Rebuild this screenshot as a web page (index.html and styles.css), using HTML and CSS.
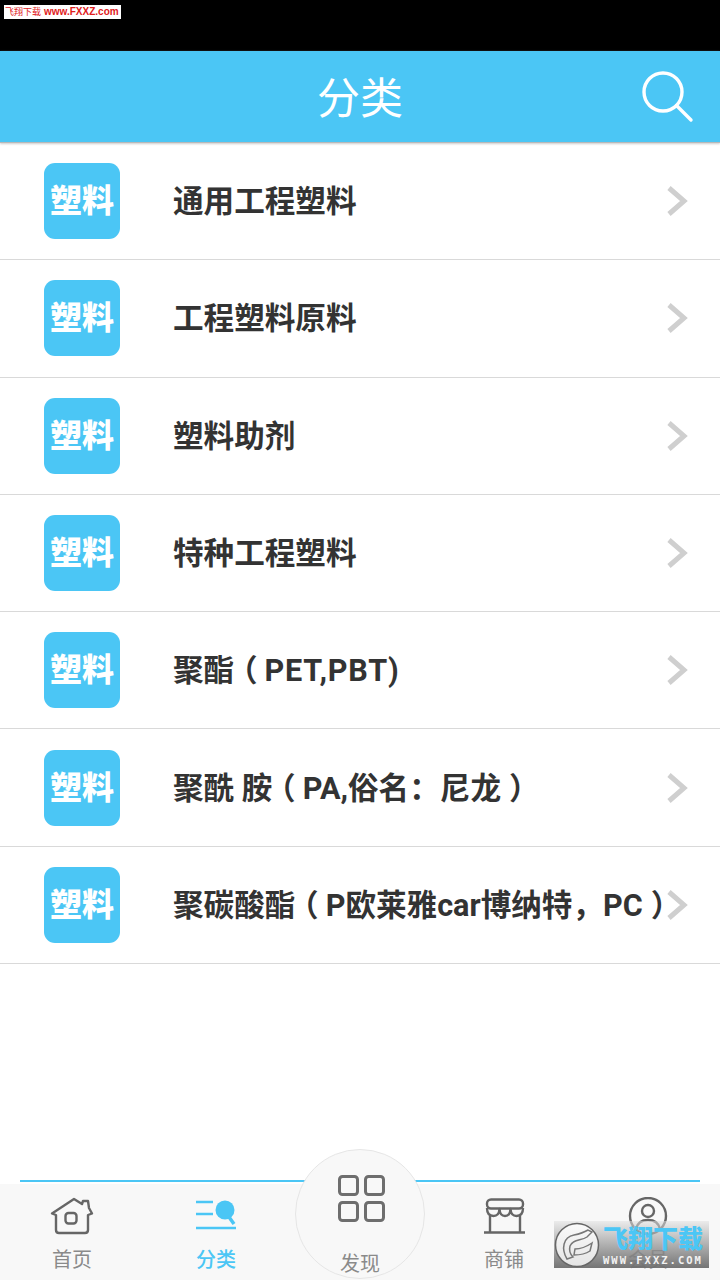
FILE: index.html
```html
<!DOCTYPE html>
<html lang="zh-CN">
<head>
<meta charset="utf-8">
<title>分类</title>
<link rel="stylesheet" href="styles.css">
</head>
<body>
<div class="page">
  <div class="status"><div class="mark-top"><span class="mark-cn">飞翔下载</span><span class="mark-latin">www.FXXZ.com</span></div></div>
  <header class="header">
    <h1 class="title">分类</h1>
    <svg class="search" viewBox="0 0 52 52" width="52" height="52"><circle cx="21" cy="21" r="19" fill="none" stroke="#fff" stroke-width="3.4"/><path d="M34.500 34.500 L49 49" stroke="#fff" stroke-width="3.4" stroke-linecap="round"/></svg>
  </header>
  <ul class="list">
    <li class="row"><div class="logo">塑料</div><div class="name">通用工程塑料</div><svg class="chev" viewBox="0 0 22 32" width="22" height="32"><path d="M3 3 L18 16 L3 29" fill="none" stroke="#cfcfcf" stroke-width="5"/></svg></li>
    <li class="row"><div class="logo">塑料</div><div class="name">工程塑料原料</div><svg class="chev" viewBox="0 0 22 32" width="22" height="32"><path d="M3 3 L18 16 L3 29" fill="none" stroke="#cfcfcf" stroke-width="5"/></svg></li>
    <li class="row"><div class="logo">塑料</div><div class="name">塑料助剂</div><svg class="chev" viewBox="0 0 22 32" width="22" height="32"><path d="M3 3 L18 16 L3 29" fill="none" stroke="#cfcfcf" stroke-width="5"/></svg></li>
    <li class="row"><div class="logo">塑料</div><div class="name">特种工程塑料</div><svg class="chev" viewBox="0 0 22 32" width="22" height="32"><path d="M3 3 L18 16 L3 29" fill="none" stroke="#cfcfcf" stroke-width="5"/></svg></li>
    <li class="row"><div class="logo">塑料</div><div class="name">聚酯<span class="paren">（</span><span class="wide">PET,PBT)</span></div><svg class="chev" viewBox="0 0 22 32" width="22" height="32"><path d="M3 3 L18 16 L3 29" fill="none" stroke="#cfcfcf" stroke-width="5"/></svg></li>
    <li class="row"><div class="logo">塑料</div><div class="name">聚酰 胺<span class="paren">（</span>PA,俗名<span class="punct">：</span>尼龙<span class="paren">）</span></div><svg class="chev" viewBox="0 0 22 32" width="22" height="32"><path d="M3 3 L18 16 L3 29" fill="none" stroke="#cfcfcf" stroke-width="5"/></svg></li>
    <li class="row"><div class="logo">塑料</div><div class="name">聚碳酸酯<span class="paren">（</span>P欧莱雅car博纳特<span class="punct">，</span>PC<span class="paren">）</span></div><svg class="chev" viewBox="0 0 22 32" width="22" height="32"><path d="M3 3 L18 16 L3 29" fill="none" stroke="#cfcfcf" stroke-width="5"/></svg></li>
  </ul>
  <div class="tab-rule"></div>
  <nav class="tabs">
    <div class="tab">
      <svg class="tab-icon" viewBox="0 0 44 38" width="44" height="38"><path d="M2 16.500 L24 2 L32 7 L33 4 L38 4 L39 11 L42 16.500 L38 18 L38 33 Q38 36 35 36 L9 36 Q6 36 6 33 L6 18 Z" fill="none" stroke="#666" stroke-width="2.400" stroke-linejoin="round"/><rect x="15.500" y="16" width="11" height="10.500" rx="3" fill="none" stroke="#666" stroke-width="2.400"/></svg>
      <span class="tab-label">首页</span>
    </div>
    <div class="tab tab-active">
      <svg class="tab-icon" viewBox="0 0 44 38" width="44" height="38"><path d="M2 5 H19 M2 17 H19 M2 31 H42" stroke="#4bc6f5" stroke-width="2.400" fill="none"/><circle cx="31" cy="13" r="9.500" fill="#4bc6f5"/><path d="M35 20 L40 27" stroke="#4bc6f5" stroke-width="3.500"/></svg>
      <span class="tab-label">分类</span>
    </div>
    <div class="tab tab-spacer"></div>
    <div class="tab">
      <svg class="tab-icon" viewBox="0 0 44 38" width="44" height="38"><rect x="5" y="2.500" width="36" height="9" rx="4" fill="none" stroke="#666" stroke-width="2.400"/><path d="M5 11 Q5 19 11.500 19 Q17 19 17.500 12 Q18 19 23 19 Q28 19 28.500 12 Q29 19 34.500 19 Q41 19 41 11 M8 18 V35 M38 18 V35 M2 35.500 H43" fill="none" stroke="#666" stroke-width="2.400" stroke-linejoin="round"/></svg>
      <span class="tab-label">商铺</span>
    </div>
    <div class="tab">
      <svg class="tab-icon" viewBox="0 0 44 38" width="44" height="38"><circle cx="22" cy="19" r="18" fill="none" stroke="#666" stroke-width="2.400"/><circle cx="22" cy="14" r="6" fill="none" stroke="#666" stroke-width="2.400"/><path d="M10 32 Q12 23 22 23 Q32 23 34 32" fill="none" stroke="#666" stroke-width="2.400"/></svg>
      <span class="tab-label">会员</span>
    </div>
    <div class="discover">
      <svg class="discover-icon" viewBox="0 0 48 48" width="48" height="48"><rect x="1.500" y="1.500" width="18" height="18" rx="3"/><rect x="27.500" y="1.500" width="18" height="18" rx="3"/><rect x="1.500" y="27.500" width="18" height="18" rx="3"/><rect x="27.500" y="27.500" width="18" height="18" rx="3"/></svg>
      <span class="tab-label">发现</span>
    </div>
    <div class="mark-bottom">
      <svg class="mark-logo" viewBox="0 0 46 46" width="46" height="46"><circle cx="23" cy="23" r="21.500" fill="#fff" fill-opacity=".8" stroke="#666" stroke-width="1.500"/><path d="M13 37 C7 27 9 15 20 13 C25 12 29 11 34 8 L38 10 L33 15 C27 19 19 17 16 24 C15 28 16 32 19 35 Z" fill="none" stroke="#777" stroke-width="1.500"/><path d="M21 27 C27 27 32 25 38 21 L36 29 C30 33 24 33 20 33 Z" fill="none" stroke="#777" stroke-width="1.500"/></svg>
      <div class="mark-text">
        <div class="mark-name">飞翔下载</div>
        <div class="mark-url">WWW.FXXZ.COM</div>
      </div>
    </div>
  </nav>
</div>
</body>
</html>
```
FILE: styles.css
```css
* { box-sizing: border-box; margin: 0; padding: 0; }
html, body { width: 720px; height: 1280px; overflow: hidden; background: #fff; }
body { font-family: "Roboto", "Noto Sans CJK SC", sans-serif; }
.page { position: relative; width: 720px; height: 1280px; display: flex; flex-direction: column; }

.status { height: 51px; flex: none; background: #000; padding: 5px 0 0 4px; }
.mark-top { width: 117px; height: 14px; background: #fff; color: #e0201c; display: flex; align-items: center; gap: 3px; padding-left: 1px; white-space: nowrap; }
.mark-cn { font: 9px/14px "Noto Sans CJK SC", sans-serif; }
.mark-latin { font: bold 10px/14px "Liberation Sans", sans-serif; }

.header { height: 92px; flex: none; background: #4bc6f5; display: flex; align-items: center; justify-content: center; position: relative; border-bottom: 1px solid #b9b9b9; box-shadow: 0 1px 2px #ccc; }
.title { color: #fff; font-size: 43px; font-weight: 400; line-height: 92px; padding-top: 4px; }
.search { position: absolute; left: 642px; top: 20px; }

.list { list-style: none; flex: 1; }
.row { height: 117.3px; display: flex; align-items: center; border-bottom: 1px solid #d9d9d9; padding: 0 32px 0 44px; }
.logo { width: 76px; height: 76px; flex: none; border-radius: 11px; background: #4bc6f5; color: #fff; font-size: 32px; font-weight: 900; line-height: 76px; text-align: center; white-space: nowrap; }
.name { flex: 1; min-width: 0; margin-left: 53px; padding-bottom: 4px; font-size: 30.600px; font-weight: 700; color: #333; white-space: nowrap; }
.wide { letter-spacing: .8px; }
.punct { font-family: "Noto Sans CJK TC", sans-serif; }
.paren { font-feature-settings: "halt"; padding: 0 7px 0 8px; }
.chev { flex: none; }

.tab-rule { height: 2px; flex: none; margin: 0 20px 2px; background: #4bc6f5; }
.tabs { height: 96px; flex: none; background: #f8f8f8; display: flex; position: relative; }
.tab { width: 144px; display: flex; flex-direction: column; align-items: center; padding-top: 13px; }
.tab-icon { display: block; }
.tab-label { font-size: 20px; line-height: 28px; color: #8a8a8a; margin-top: 11px; }
.tab-active .tab-label { color: #4bc6f5; font-weight: 500; }

.discover { position: absolute; left: 295px; top: -35px; width: 130px; height: 130px; border-radius: 50%; background: #f8f8f8; border: 1px solid #e6e6e6; display: flex; flex-direction: column; align-items: center; padding-top: 25px; }
.discover-icon { display: block; margin-left: 3px; fill: none; stroke: #6e6e6e; stroke-width: 3; }
.discover .tab-label { margin-top: 27px; }

.mark-bottom { position: absolute; left: 554px; top: 37px; width: 155px; height: 47px; display: flex; align-items: center; gap: 3px; background: linear-gradient(rgba(225,225,225,.55), rgba(110,110,110,.95)); }
.mark-logo { flex: none; }
.mark-text { display: flex; flex-direction: column; padding-top: 3px; }
.mark-name { color: #4bc6f5; font-size: 25px; font-weight: 900; line-height: 27px; white-space: nowrap; }
.mark-url { color: #f2f2f2; font: bold 10.500px/13px "DejaVu Sans Mono", monospace; letter-spacing: 2px; margin-top: 1px; white-space: nowrap; }
```
